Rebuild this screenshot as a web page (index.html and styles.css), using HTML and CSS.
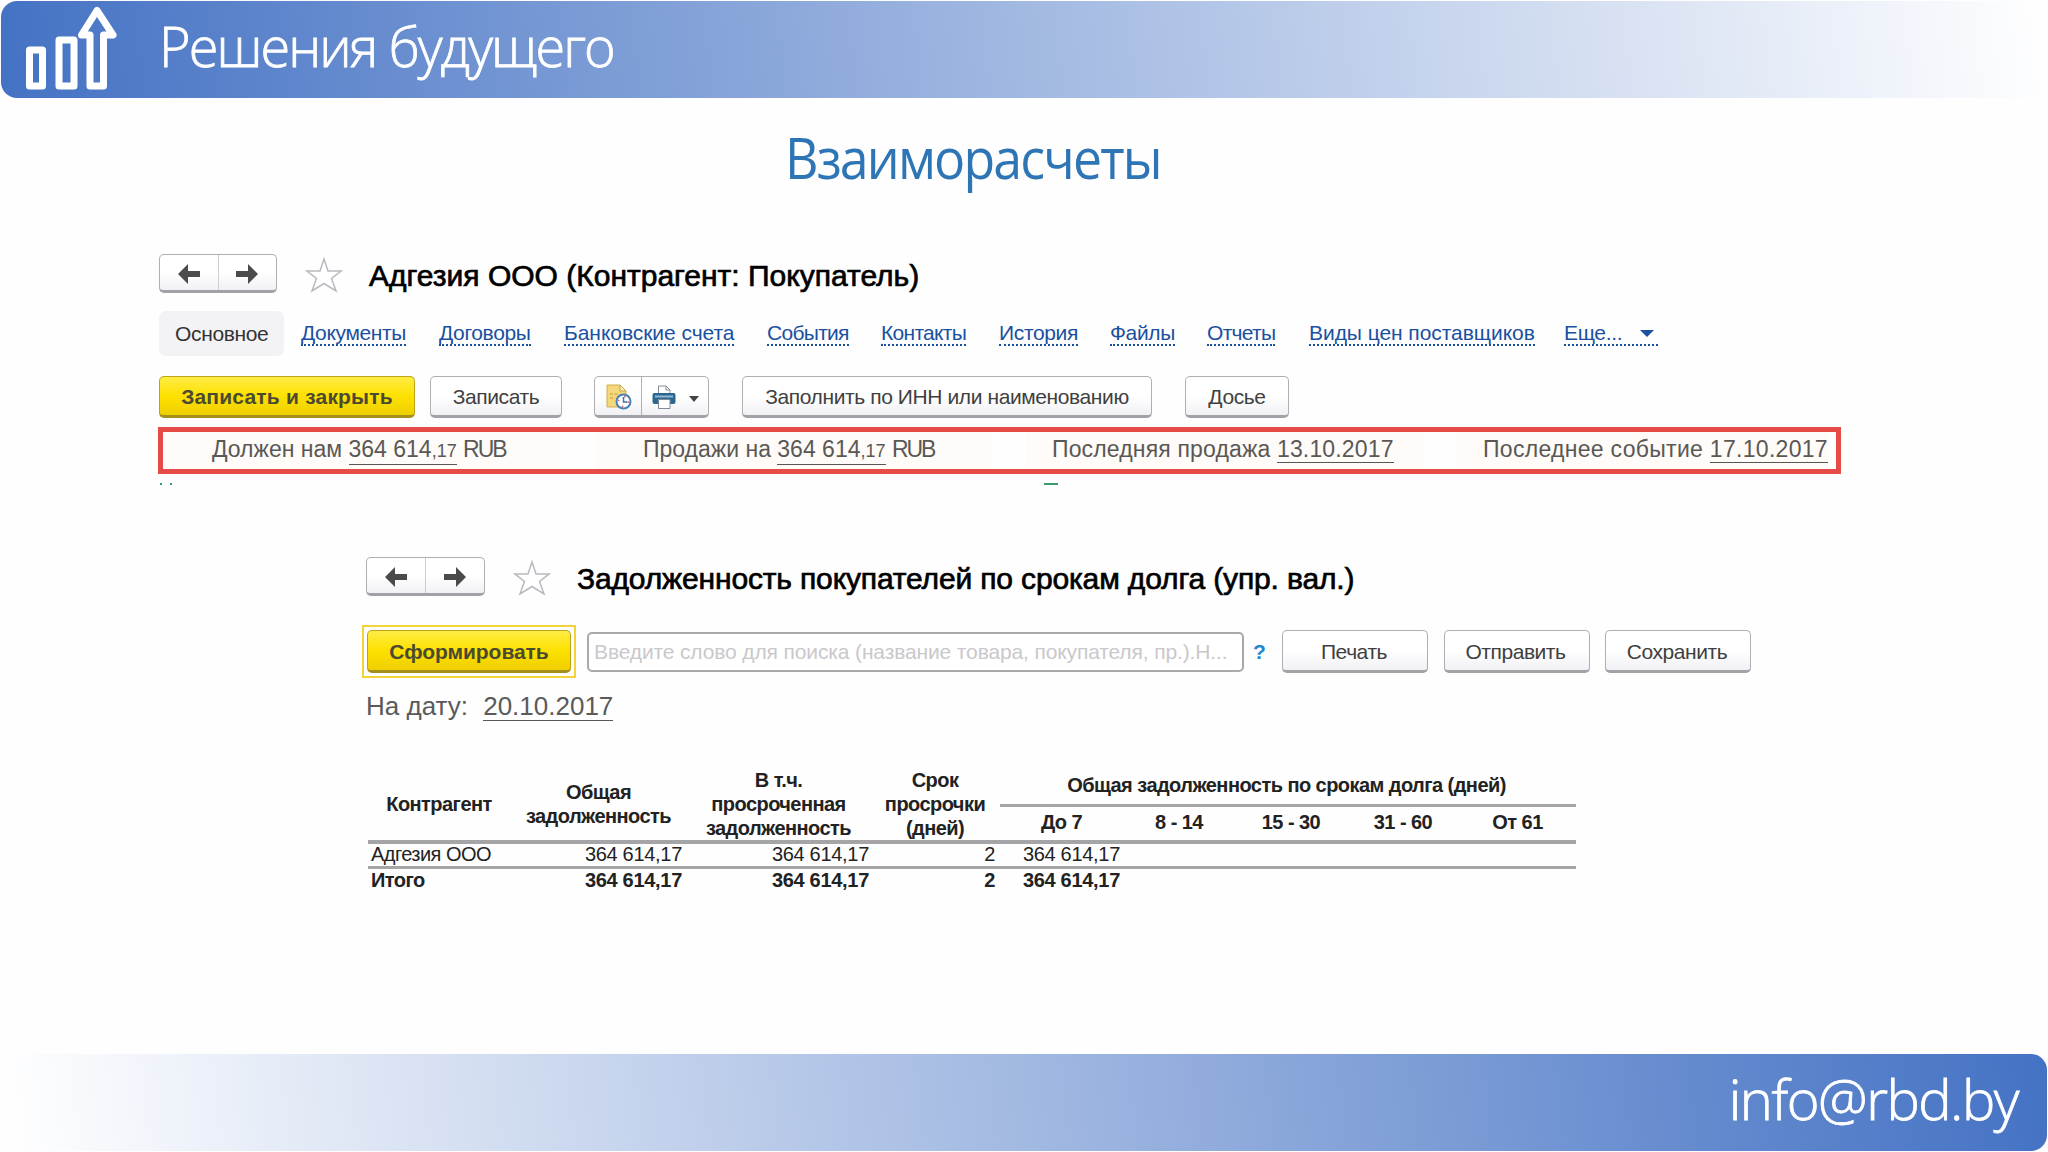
FILE: index.html
```html
<!DOCTYPE html>
<html lang="ru">
<head>
    <meta charset="UTF-8">
    <meta name="viewport" content="width=device-width, initial-scale=1.0">
    <title>Взаиморасчеты</title>
    <link rel="stylesheet" href="styles.css">
</head>
<body>
    <header class="top-bar">
        <svg class="logo" width="100" height="92" viewBox="0 0 100 92">
            <g fill="none" stroke="#fff" stroke-width="7" stroke-linejoin="round">
                <rect x="12.500" y="50" width="13" height="36"/>
                <rect x="42" y="40" width="15" height="46"/>
                <path d="M73 86V35H64.500L80 10.500L96 35H86.500V86Z"/>
            </g>
        </svg>
        <span class="brand">Решения будущего</span>
    </header>

    <h1 class="slide-title">Взаиморасчеты</h1>

    <section class="card">
        <div class="card-head">
            <div class="nav-buttons">
                <button><svg width="22" height="20" viewBox="0 0 22 20"><path d="M0 10L10 0V7H22V13H10V20Z"/></svg></button>
                <button><svg width="22" height="20" viewBox="0 0 22 20"><path d="M22 10L12 0V7H0V13H12V20Z"/></svg></button>
            </div>
            <svg class="star" width="38" height="36" viewBox="0 0 38 36"><path d="M19 2L23 14H36L26.500 21.500L31 34L19 26.500L7 34L11.500 21.500L2 14H15Z"/></svg>
            <h2>Адгезия ООО (Контрагент: Покупатель)</h2>
        </div>

        <nav class="tabs">
            <span class="active">Основное</span>
            <a>Документы</a>
            <a>Договоры</a>
            <a class="wide">Банковские счета</a>
            <a class="tight">События</a>
            <a class="tight">Контакты</a>
            <a>История</a>
            <a>Файлы</a>
            <a class="tight">Отчеты</a>
            <a class="wide">Виды цен поставщиков</a>
            <a class="more">Еще...<i class="caret"></i></a>
        </nav>

        <div class="toolbar">
            <button class="btn primary save-close">Записать и закрыть</button>
            <button class="btn save">Записать</button>
            <div class="icon-group">
                <button>
                    <svg width="26" height="26" viewBox="0 0 26 26">
                        <path d="M1 1H14L20 7V23H1Z" fill="#f5d77c" stroke="#d3ab4e"/>
                        <path d="M14 1V7H20Z" fill="#fff3c4" stroke="#c9a24a"/>
                        <path d="M4 10H12M4 14H9" stroke="#d8b04e" stroke-width="1.500" stroke-dasharray="3 1.500"/>
                        <circle cx="17.500" cy="17.500" r="7" fill="#fff" stroke="#4a80b4" stroke-width="2"/>
                        <circle cx="17.500" cy="17.500" r="5" fill="none" stroke="#d0605c" stroke-width="1.500" stroke-dasharray="1.500 6.350"/>
                        <path d="M17.500 13V18H21.500" fill="none" stroke="#3b6fb0" stroke-width="1.500"/>
                    </svg>
                </button>
                <button class="print">
                    <svg width="24" height="24" viewBox="0 0 24 24">
                        <path d="M6.500 1H14L18 5V10H6.500Z" fill="#fff" stroke="#7f8c98"/>
                        <path d="M14 1V5H18" fill="none" stroke="#7f8c98"/>
                        <rect x="0.500" y="8" width="23" height="11" rx="2" fill="#2f6690"/>
                        <path d="M3 11.500H21" stroke="#8db8d6" stroke-width="2"/>
                        <path d="M6.500 14.500H18V23.500H6.500Z" fill="#fff" stroke="#7f8c98"/>
                    </svg>
                    <i class="caret"></i>
                </button>
            </div>
            <button class="btn fill">Заполнить по ИНН или наименованию</button>
            <button class="btn dossier">Досье</button>
        </div>

        <div class="summary">
            <div>Должен нам <u>364 614<small>,17</small></u> <span>RUB</span></div>
            <div>Продажи на <u>364 614<small>,17</small></u> <span>RUB</span></div>
            <div>Последняя продажа <u>13.10.2017</u></div>
            <div>Последнее событие <u>17.10.2017</u></div>
        </div>
        <div class="marks"><i></i><i></i><i class="dash"></i></div>
    </section>

    <section class="report">
        <div class="card-head">
            <div class="nav-buttons">
                <button><svg width="22" height="20" viewBox="0 0 22 20"><path d="M0 10L10 0V7H22V13H10V20Z"/></svg></button>
                <button><svg width="22" height="20" viewBox="0 0 22 20"><path d="M22 10L12 0V7H0V13H12V20Z"/></svg></button>
            </div>
            <svg class="star" width="38" height="36" viewBox="0 0 38 36"><path d="M19 2L23 14H36L26.500 21.500L31 34L19 26.500L7 34L11.500 21.500L2 14H15Z"/></svg>
            <h2>Задолженность покупателей по срокам долга (упр. вал.)</h2>
        </div>

        <div class="report-bar">
            <div class="focus"><button class="btn primary">Сформировать</button></div>
            <div class="search">Введите слово для поиска (название товара, покупателя, пр.).Н...</div>
            <span class="help">?</span>
            <button class="btn">Печать</button>
            <button class="btn">Отправить</button>
            <button class="btn">Сохранить</button>
        </div>

        <p class="on-date">На дату: <u>20.10.2017</u></p>

        <table class="debts">
            <colgroup>
                <col class="c-name"><col class="c-total"><col class="c-over"><col class="c-days">
                <col class="c-first"><col class="c-age"><col class="c-age"><col class="c-age"><col class="c-last">
            </colgroup>
            <thead>
                <tr>
                    <th rowspan="2">Контрагент</th>
                    <th rowspan="2">Общая<br>задолженность</th>
                    <th rowspan="2">В т.ч.<br>просроченная<br>задолженность</th>
                    <th rowspan="2">Срок<br>просрочки<br>(дней)</th>
                    <th class="group" colspan="5">Общая задолженность по срокам долга (дней)</th>
                </tr>
                <tr class="ages">
                    <th>До 7</th>
                    <th>8 - 14</th>
                    <th>15 - 30</th>
                    <th>31 - 60</th>
                    <th>От 61</th>
                </tr>
            </thead>
            <tbody>
                <tr>
                    <td class="name">Адгезия ООО</td>
                    <td>364 614,17</td>
                    <td>364 614,17</td>
                    <td>2</td>
                    <td>364 614,17</td>
                    <td></td><td></td><td></td><td></td>
                </tr>
                <tr class="total">
                    <td class="name">Итого</td>
                    <td>364 614,17</td>
                    <td>364 614,17</td>
                    <td>2</td>
                    <td>364 614,17</td>
                    <td></td><td></td><td></td><td></td>
                </tr>
            </tbody>
        </table>
    </section>

    <footer class="bottom-bar">info@rbd.by</footer>
</body>
</html>
```
FILE: styles.css
```css
* {
    box-sizing: border-box;
}
body {
    margin: 0;
    width: 2048px;
    height: 1152px;
    overflow: hidden;
    display: flex;
    flex-direction: column;
    background: #fefefe;
    font-family: "Liberation Sans", Arial, sans-serif;
    font-size: 21px;
    color: #333;
}
button {
    font: inherit;
    letter-spacing: inherit;
    color: inherit;
    padding: 0;
}
.top-bar {
    height: 97px;
    margin: 1px 0 0 1px;
    display: flex;
    align-items: flex-start;
    border-radius: 16px;
    background: linear-gradient(83deg, #4472c4, #fff);
    color: #fff;
}
.logo {
    margin: -1px 0 0 16px;
}
.brand {
    margin: 5px 0 0 42px;
    font: 300 56px/78px "Open Sans", "Noto Sans", sans-serif;
    letter-spacing: -2px;
    transform: scaleX(0.965);
    transform-origin: left;
    -webkit-text-stroke: 0.800px #fff;
}
.slide-title {
    width: 500px;
    margin: 20px 0 0 785px;
    font: 400 56px/78px "Open Sans", "Noto Sans", sans-serif;
    letter-spacing: -2px;
    transform: scaleX(0.926);
    transform-origin: left;
    color: #2e75b6;
}
.card {
    width: 1683px;
    height: 240px;
    margin: 58px 0 0 158px;
}
.card-head {
    display: flex;
    align-items: center;
    height: 39px;
}
.nav-buttons {
    display: flex;
    width: 118px;
    height: 39px;
    margin-left: 1px;
    border: 1.500px solid #b0aeb3;
    border-bottom: 3px solid #a3a1a7;
    border-radius: 5px;
    background: linear-gradient(#fff 50%, #f1f0f4);
}
.nav-buttons button {
    flex: 1;
    display: flex;
    align-items: center;
    justify-content: center;
    padding-top: 2px;
    border: none;
    background: none;
}
.nav-buttons button + button {
    border-left: 1px solid #cfcdd2;
}
.nav-buttons path {
    fill: #4b4b4b;
}
.star {
    margin: 3px 0 0 28px;
    fill: #fff;
    stroke: #b9b9c0;
    stroke-width: 1.500px;
}
.card-head h2 {
    margin: 4px 0 0 26px;
    font-size: 30px;
    font-weight: 400;
    line-height: 36px;
    white-space: nowrap;
    color: #000;
    -webkit-text-stroke: 0.700px #000;
}
.tabs {
    display: grid;
    grid-template-columns: 142px 138px 125px 203px 114px 118px 111px 97px 102px 255px 95px;
    align-items: center;
    height: 45px;
    margin: 18px 0 0 1px;
    letter-spacing: -0.350px;
    white-space: nowrap;
    color: #1a50a0;
}
.tabs a {
    justify-self: start;
    margin-top: 1px;
    line-height: 22px;
    border-bottom: 2px dotted #1a50a0;
}
.tabs .wide {
    letter-spacing: -0.050px;
}
.tabs .tight {
    letter-spacing: -0.700px;
}
.tabs .active {
    width: 125px;
    height: 45px;
    padding-left: 16px;
    line-height: 46px;
    border-radius: 7px;
    background: #f3f2f5;
    color: #333;
}
.caret {
    display: inline-block;
    border: 7px solid transparent;
    border-top-color: currentColor;
    border-bottom: none;
}
.more .caret {
    margin: 0 4px 3px 18px;
}
.toolbar {
    display: flex;
    height: 42px;
    margin: 20px 0 0 1px;
    letter-spacing: -0.400px;
}
.btn {
    height: 42px;
    padding-top: 2px;
    border: 1.500px solid #b0aeb3;
    border-bottom: 3px solid #a3a1a7;
    border-radius: 5px;
    background: linear-gradient(#fff 50%, #f1f0f4);
    color: #404040;
    white-space: nowrap;
}
.btn.primary {
    border-color: #bda51a;
    border-bottom-color: #a48f1c;
    background: linear-gradient(#ffec45, #fde100 50%, #efcf00);
    font-weight: 700;
    color: #4b4a30;
}
.btn.save-close {
    width: 256px;
    letter-spacing: 0.200px;
}
.save {
    width: 132px;
    margin-left: 15px;
}
.icon-group {
    display: flex;
    width: 115px;
    margin-left: 32px;
    border: 1.500px solid #b0aeb3;
    border-bottom: 3px solid #a3a1a7;
    border-radius: 5px;
    background: linear-gradient(#fff 50%, #f1f0f4);
}
.icon-group button {
    display: flex;
    align-items: center;
    justify-content: center;
    width: 46px;
    padding: 2px 0 0 1px;
    border: none;
    background: none;
    color: #444;
}
.icon-group .print {
    flex: 1;
    border-left: 1.500px solid #b0aeb3;
}
.print .caret {
    margin: 3px 0 0 13px;
    border-width: 6px 5px 0;
}
.fill {
    width: 410px;
    margin-left: 33px;
}
.dossier {
    width: 104px;
    margin-left: 33px;
}
.summary {
    display: grid;
    grid-template-columns: 397px 397px 397px 372px;
    column-gap: 34px;
    height: 47px;
    margin-top: 9px;
    padding-left: 1px;
    border: 5px solid #e64b47;
    font-size: 23px;
    line-height: 35px;
    white-space: nowrap;
    color: #5a5855;
}
.summary div {
    height: 37px;
    background: #fefbf8;
    padding-left: 48px;
}
.summary div:nth-child(3) {
    padding-left: 26px;
    letter-spacing: 0.150px;
}
.summary div:nth-child(4) {
    padding-left: 26px;
    letter-spacing: 0.300px;
}
.summary span {
    letter-spacing: -2px;
}
u {
    text-decoration: none;
    display: inline-block;
    line-height: 26px;
    border-bottom: 1.500px solid #5a5855;
}
small {
    font-size: 18px;
}
/* tops of the next row's labels, cut off by the edge */
.marks {
    display: flex;
    height: 2px;
    margin: 9px 0 0 2px;
}
.marks i {
    width: 2px;
    margin-right: 8px;
    background: #3d9a6c;
}
.marks .dash {
    width: 14px;
    margin-left: 864px;
}
.report {
    width: 1400px;
    margin: 63px 0 0 362px;
}
.report h2 {
    letter-spacing: -0.150px;
}
.report .nav-buttons {
    margin-left: 4px;
    width: 119px;
}
.report-bar {
    display: flex;
    align-items: center;
    height: 53px;
    margin-top: 29px;
    letter-spacing: -0.450px;
}
.focus {
    width: 214px;
    height: 53px;
    padding: 3px;
    border: 2px solid #f3d336;
}
.focus .btn {
    width: 204px;
    height: 43px;
    letter-spacing: -0.050px;
}
.search {
    width: 657px;
    height: 40px;
    flex: none;
    margin-left: 11px;
    padding-left: 5px;
    line-height: 36px;
    border: 2px solid #aaa8ad;
    border-radius: 5px;
    letter-spacing: -0.130px;
    white-space: nowrap;
    color: #c9c8cb;
    background: #fff;
}
.help {
    width: 38px;
    flex: none;
    padding-left: 9px;
    font-weight: 700;
    color: #2088cc;
}
.focus,
.report-bar > .btn {
    flex: none;
}
.report-bar > .btn {
    width: 146px;
    height: 43px;
    padding-right: 2px;
    margin-right: 15.500px;
}
.on-date {
    margin: 10px 0 0 4px;
    font-size: 26px;
    line-height: 36px;
    white-space: nowrap;
    color: #5a5a5a;
}
.on-date u {
    margin-left: 8px;
    line-height: 27px;
}
.debts {
    width: 1208px;
    margin: 40px 0 0 6px;
    table-layout: fixed;
    border-collapse: separate;
    border-spacing: 0;
    font-size: 20px;
    letter-spacing: -0.300px;
    color: #222;
}
.c-name { width: 143px; }
.c-total { width: 176px; }
.c-over { width: 184px; }
.c-days { width: 129px; }
.c-first { width: 123px; }
.c-age { width: 112px; }
.c-last { width: 117px; }
.debts th {
    padding: 4px 1px 0 0;
    line-height: 24px;
    letter-spacing: -0.550px;
    white-space: nowrap;
    border-bottom: 4px solid #a5a4a6;
}
.debts .group {
    height: 43px;
    padding: 2px 3px 0 0;
    border-bottom-width: 3px;
}
.debts .ages th {
    height: 37px;
    padding: 0 0 3px;
}
.debts td {
    height: 25px;
    padding: 0 5px 2px 0;
    line-height: 20px;
    text-align: right;
    white-space: nowrap;
    border-bottom: 3px solid #a5a4a6;
}
.debts td:nth-child(3) {
    padding-right: 2px;
}
.debts td:nth-child(5) {
    padding-right: 3px;
}
.debts td.name {
    padding-left: 3px;
    letter-spacing: -0.550px;
    text-align: left;
}
.debts .total td {
    padding-bottom: 4px;
    font-weight: 700;
    border-bottom: none;
}
.bottom-bar {
    height: 97px;
    margin: auto 1px 1px 5px;
    padding-right: 29px;
    border-radius: 16px;
    background: linear-gradient(263deg, #4472c4, #fff);
    font: 300 56px/89px "Open Sans", "Noto Sans", sans-serif;
    letter-spacing: -1.500px;
    text-align: right;
    color: #fff;
    -webkit-text-stroke: 0.800px #fff;
}
```
